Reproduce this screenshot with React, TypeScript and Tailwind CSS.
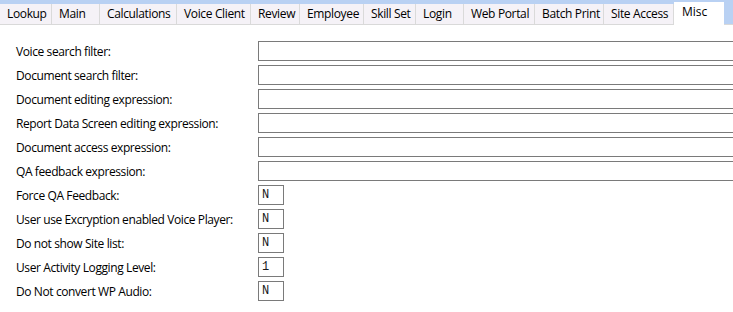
import React from "react";

const tabs: [string, number][] = [
  ["Lookup", 52],
  ["Main", 48],
  ["Calculations", 77],
  ["Voice Client", 74],
  ["Review", 49],
  ["Employee", 64],
  ["Skill Set", 52],
  ["Login", 48],
  ["Web Portal", 71],
  ["Batch Print", 69],
  ["Site Access", 70],
];

const rows: [string, string | null][] = [
  ["Voice search filter:", null],
  ["Document search filter:", null],
  ["Document editing expression:", null],
  ["Report Data Screen editing expression:", null],
  ["Document access expression:", null],
  ["QA feedback expression:", null],
  ["Force QA Feedback:", "N"],
  ["User use Excryption enabled Voice Player:", "N"],
  ["Do not show Site list:", "N"],
  ["User Activity Logging Level:", "1"],
  ["Do Not convert WP Audio:", "N"],
];

export default function App() {
  return (
    <div
      className="w-[733px] h-[312px] bg-white overflow-hidden text-[12px] text-black"
      style={{ fontFamily: '"Open Sans", "Noto Sans", sans-serif' }}
    >
      <div className="relative h-[25px] bg-[#b9d1f3] border-b border-[#d9d9d9] flex items-end">
        {tabs.map(([t, w]) => (
          <div
            key={t}
            className="h-[20px] bg-[#f5f2f7] border-r border-[#dadada] pl-[7px] flex items-center leading-none shrink-0 whitespace-nowrap tracking-[-0.35px]"
            style={{ width: w }}
          >
            {t}
          </div>
        ))}
        <div className="relative h-[23px] w-[50px] bg-white -mb-px pl-[8px] pt-[3px] leading-[14px] shrink-0">
          Misc
        </div>
      </div>
      <div className="pt-[16px] flex flex-col gap-[4px]">
        {rows.map(([label, val]) => (
          <div key={label} className="flex items-center h-[20px]">
            <div className="w-[258px] shrink-0 pl-[16px] pt-px whitespace-nowrap tracking-[-0.4px]">{label}</div>
            {val === null ? (
              <div className="h-[20px] w-[500px] border border-[#7a7a7a] shrink-0" />
            ) : (
              <div
                className="h-[20px] w-[26px] border border-[#7a7a7a] shrink-0 pl-[3px] leading-[18px] text-[12px] text-[#1a1a1a]"
                style={{ fontFamily: '"Liberation Mono", "Courier New", monospace' }}
              >
                {val}
              </div>
            )}
          </div>
        ))}
      </div>
    </div>
  );
}
